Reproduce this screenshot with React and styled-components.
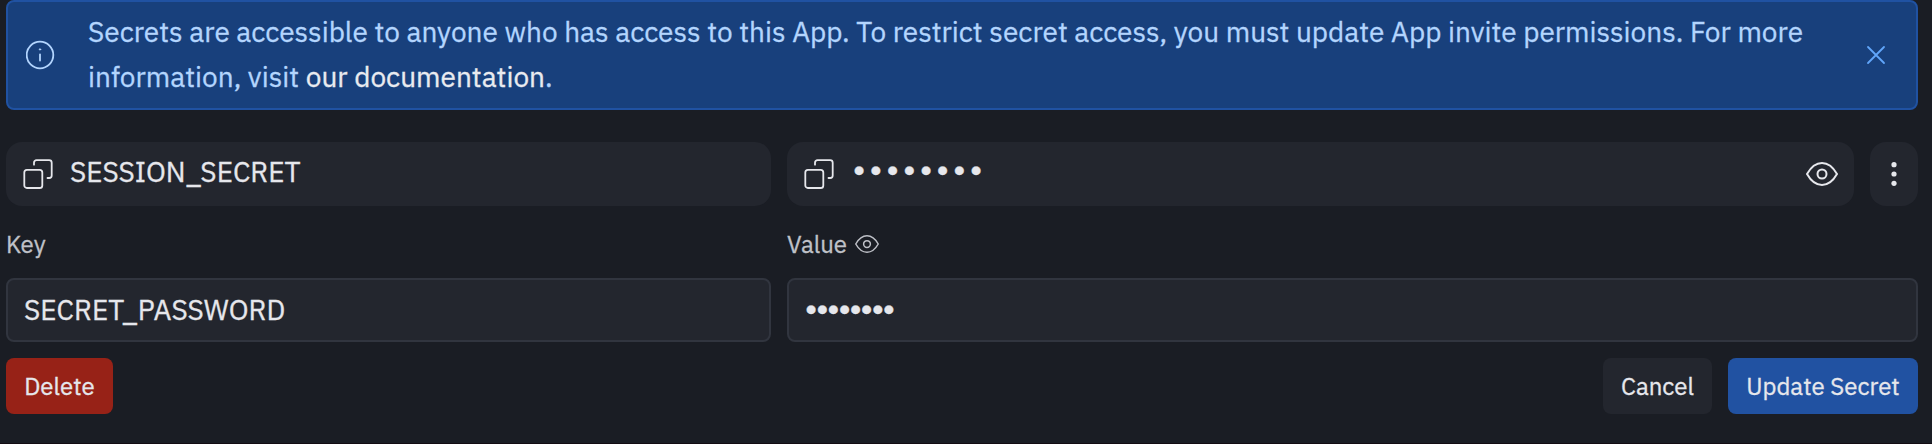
import React from "react";
import styled, { createGlobalStyle } from "styled-components";

const Global = createGlobalStyle`
  * { box-sizing: border-box; }
  html, body { margin: 0; background: #1a1d24; }
  body {
    font-family: "IBM Plex Sans", Roboto, "Liberation Sans", sans-serif;
    color: #e6e7ec;
    -webkit-text-stroke: 0.3px currentColor;
  }
`;

const Page = styled.main`
  height: 444px;
  padding: 0 14px 0 6px;
  background: #1a1d24;
  border-bottom: 1px solid #130c12;
  overflow: hidden;
`;

const Banner = styled.section`
  height: 110px;
  display: flex;
  align-items: center;
  padding: 0 30px 0 18px;
  border: 2px solid #2052a2;
  border-radius: 8px;
  background: #18407c;
  color: #b3d5fe;
`;

const BannerText = styled.p`
  flex: 1;
  margin: 0 0 2px 32px;
  font-size: 28px;
  line-height: 45px;
  white-space: nowrap;
`;

const DocLink = styled.a`
  color: #e9ebf0;
`;

const Icon = styled.svg`
  display: block;
  flex: none;
  fill: none;
  stroke: currentColor;
  stroke-linecap: round;
  stroke-linejoin: round;
`;

const Columns = styled.div`
  display: grid;
  grid-template-columns: 765px 1fr;
  column-gap: 16px;
`;

const SecretRow = styled.div`
  display: grid;
  grid-template-columns: 765px 1fr 48px;
  column-gap: 16px;
  margin-top: 32px;
`;

const Cell = styled.div`
  height: 64px;
  display: flex;
  align-items: center;
  padding: 0 16px 0 17px;
  border-radius: 16px;
  background: #23262e;
`;

const CellText = styled.span`
  flex: 1;
  margin-left: 17px;
  padding-bottom: 4px;
  font-size: 28px;
  line-height: 44px;
`;

const MenuButton = styled.button`
  height: 64px;
  display: grid;
  place-items: center;
  padding: 0;
  border: 0;
  border-radius: 16px;
  background: #23262e;
  color: inherit;
`;

const Label = styled.label`
  display: flex;
  align-items: center;
  gap: 8px;
  height: 72px;
  padding-top: 4px;
  font-size: 24px;
  color: #bfc1c8;
`;

const Field = styled.div`
  height: 64px;
  display: flex;
  align-items: center;
  padding: 0 16px;
  border: 2px solid #31353f;
  border-radius: 8px;
  background: #23262e;
  font-size: 28px;
`;

const FieldText = styled.span`
  padding-bottom: 2px;
`;

const Dots = styled.span`
  flex: 1;
  margin-left: ${(p) => p.$left}px;
  padding-bottom: ${(p) => p.$lift || 0}px;
  font-family: "Liberation Sans", sans-serif;
  font-size: 32px;
  line-height: 44px;
  letter-spacing: ${(p) => p.$track}px;
`;

const Actions = styled.div`
  display: flex;
  justify-content: flex-end;
  gap: 16px;
  margin-top: 16px;
`;

const Button = styled.button`
  width: ${(p) => p.$width}px;
  height: 56px;
  padding: 0;
  border: 0;
  border-radius: 8px;
  background: ${(p) => p.$bg};
  color: #e6e7ec;
  font: 24px "IBM Plex Sans", Roboto, sans-serif;
`;

const DangerButton = styled(Button)`
  margin-right: auto;
`;

const CopyIcon = () => (
  <Icon width="30" height="30" viewBox="0 0 30 30" strokeWidth="1.8">
    <rect x="1.3" y="10.8" width="18" height="18.2" rx="2.6" />
    <path d="M11 5.7V3.7a2.5 2.5 0 0 1 2.5-2.5h12.7a2.5 2.5 0 0 1 2.5 2.5V16.5a2.5 2.5 0 0 1-2.5 2.5h-1.7" />
  </Icon>
);

const EyeIcon = ({ width, height, stroke }) => (
  <Icon width={width} height={height} viewBox="0 0 32 24" strokeWidth={stroke}>
    <path d="M1 12C5 5 10 1 16 1s11 4 15 11c-4 7-9 11-15 11S5 19 1 12Z" />
    <circle cx="16" cy="12" r="4.5" />
  </Icon>
);

export default function App() {
  return (
    <>
      <Global />
      <Page>
        <Banner>
          <Icon width="30" height="30" viewBox="0 0 30 30" strokeWidth="1.8">
            <circle cx="14" cy="15" r="13.3" />
            <path d="M14 14.5v6" />
            <circle cx="14" cy="9.4" r="0.7" fill="currentColor" strokeWidth="1" />
          </Icon>
          <BannerText>
            Secrets are accessible to anyone who has access to this App. To restrict secret access, you must update App invite permissions. For more
            <br />
            information, visit <DocLink>our documentation</DocLink>.
          </BannerText>
          <Icon width="20" height="20" viewBox="0 0 20 20" strokeWidth="1.8" color="#61a6fa">
            <path d="m2 2 16 16M18 2 2 18" />
          </Icon>
        </Banner>

        <SecretRow>
          <Cell>
            <CopyIcon />
            <CellText>SESSION_SECRET</CellText>
          </Cell>
          <Cell>
            <CopyIcon />
            <Dots $left={19.6} $track={5.5} $lift={8}>••••••••</Dots>
            <EyeIcon width="32" height="24" stroke="2" />
          </Cell>
          <MenuButton aria-label="Actions">
            <Icon width="6" height="24" viewBox="0 0 6 24">
              <g fill="currentColor" stroke="none">
                <circle cx="3" cy="2.7" r="2.6" />
                <circle cx="3" cy="12" r="2.6" />
                <circle cx="3" cy="21.3" r="2.6" />
              </g>
            </Icon>
          </MenuButton>
        </SecretRow>

        <Columns>
          <Label>Key</Label>
          <Label>
            <span>Value</span>
            <EyeIcon width="24" height="18" stroke="2" />
          </Label>
          <Field>
            <FieldText>SECRET_PASSWORD</FieldText>
          </Field>
          <Field>
            <Dots $left={0.6} $track={-0.1} $lift={2}>••••••••</Dots>
          </Field>
        </Columns>

        <Actions>
          <DangerButton $width={107} $bg="#972217">Delete</DangerButton>
          <Button $width={109} $bg="#23262e">Cancel</Button>
          <Button $width={190} $bg="#2152a2">Update Secret</Button>
        </Actions>
      </Page>
    </>
  );
}
